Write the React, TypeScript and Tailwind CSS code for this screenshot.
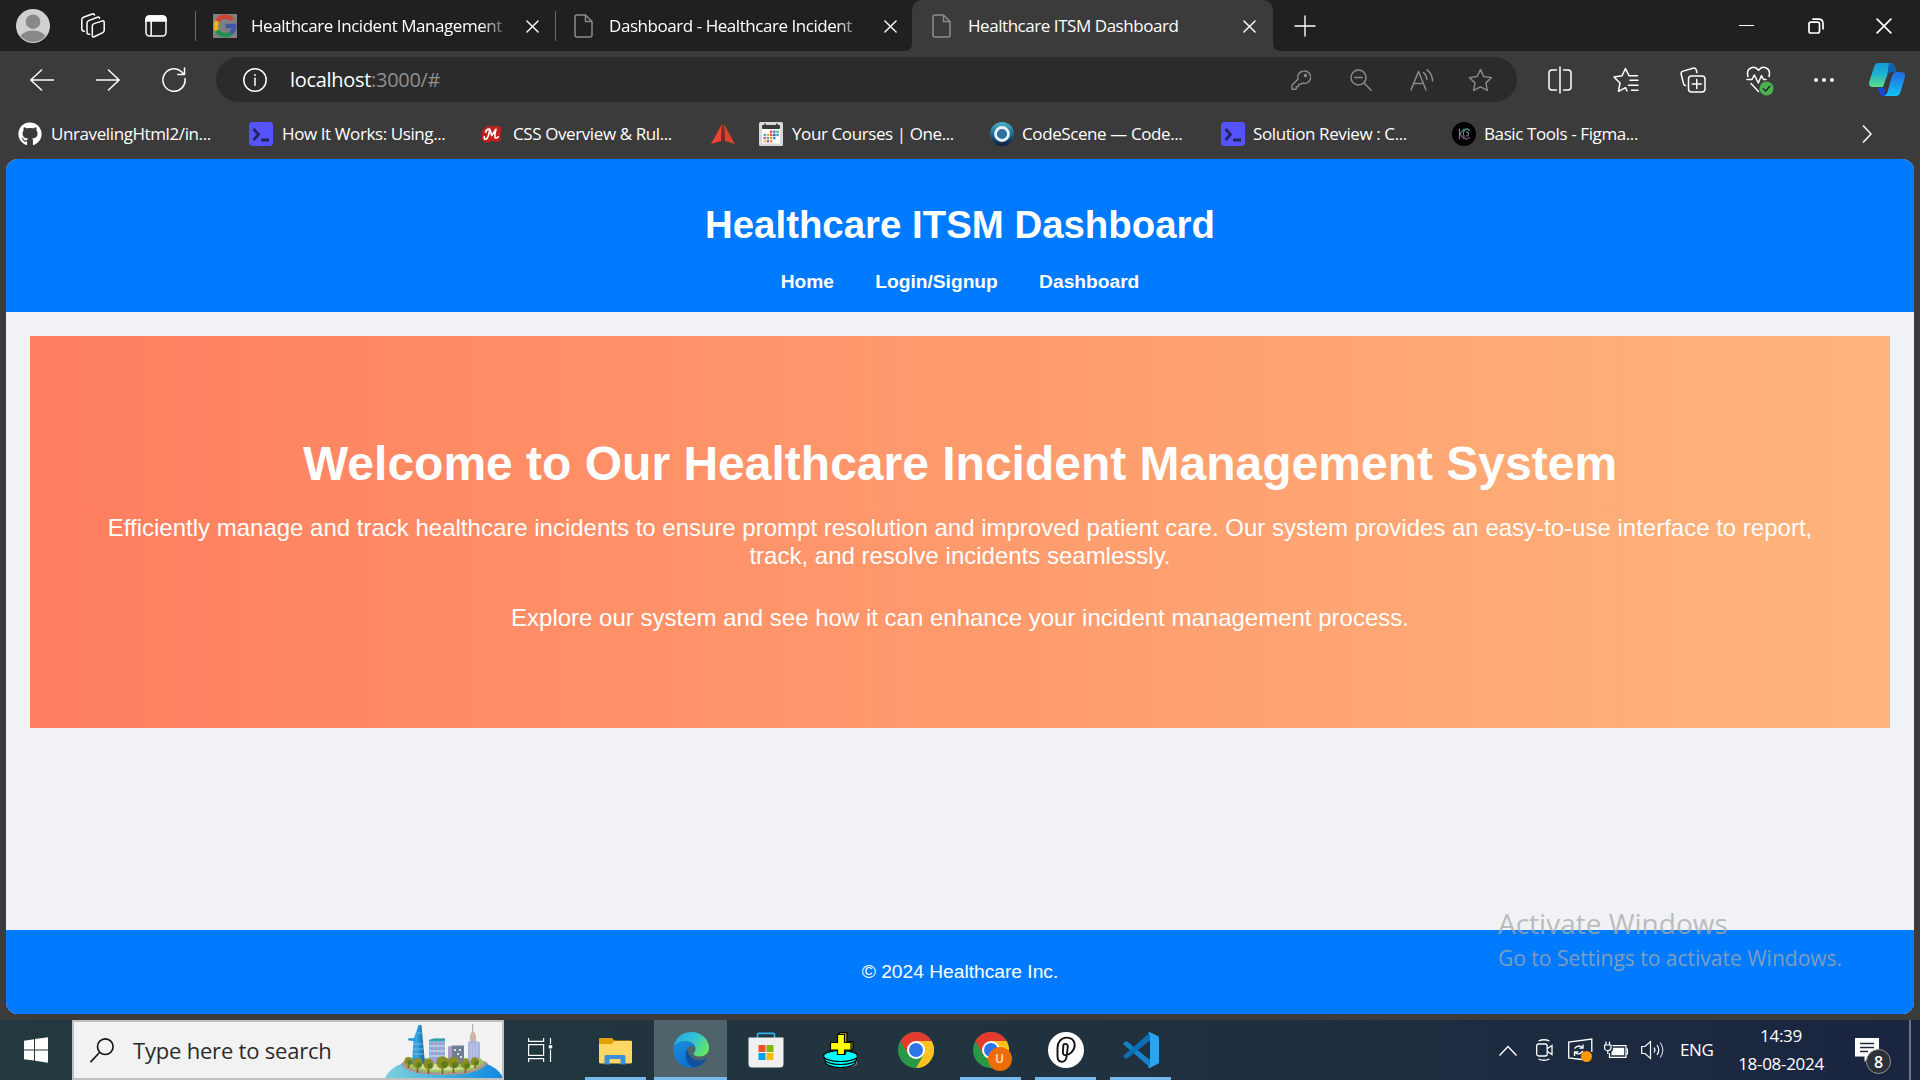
import React from "react";
import { FaGithub } from "react-icons/fa";

type IconProps = { className?: string };

/* ---------- Browser icons ---------- */

const Avatar = ({ className }: IconProps) => (
  <svg viewBox="0 0 34 34" className={className}>
    <defs>
      <clipPath id="av"><circle cx="17" cy="17" r="16" /></clipPath>
    </defs>
    <circle cx="17" cy="17" r="17" fill="#d2d0ce" />
    <g clipPath="url(#av)">
      <circle cx="17" cy="12.7" r="7.3" fill="#8a8886" />
      <ellipse cx="17" cy="32" rx="14" ry="10.5" fill="#8a8886" />
    </g>
  </svg>
);

const Workspaces = ({ className }: IconProps) => (
  <svg viewBox="0 0 24 25" className={className} fill="none" stroke="#fff" strokeWidth="1.5" strokeLinejoin="round" strokeLinecap="round">
    <path d="M13 10.6 L21.5 7.9 Q23.2 7.5 23.2 9.3 V17.6 Q23.2 19 21.8 19.7 L13.2 23.8 Q11.3 24.5 11.3 22.5 V13 Q11.3 11.2 13 10.6Z" />
    <path d="M8.6 21.3 Q6 21.6 6 19.4 V9.9 Q6 8.3 7.7 7.6 L16.5 4.2 Q18.3 3.7 18.6 5.2" />
    <path d="M3.3 18.2 Q.8 18.2 .8 16 V6.7 Q.8 5 2.5 4.3 L11.3 1 Q13 .5 13.6 2" />
  </svg>
);

const TabActions = ({ className }: IconProps) => (
  <svg viewBox="0 0 22 22" className={className} fill="none" stroke="#fff" strokeWidth="1.5">
    <rect x="1" y="1" width="20" height="20" rx="3.5" />
    <path d="M1 4.5 Q1 1 4.500 1 H17.500 Q21 1 21 4.500 V6 H1Z" fill="#fff" />
    <path d="M6.200 6 V21" />
  </svg>
);

const GoogleG = ({ className }: IconProps) => (
  <svg viewBox="0 0 24 24" className={className} fill="none" strokeWidth="4.400">
    <rect width="24" height="24" fill="#808080" />
    <path d="M19.200 5.800 A9.200 9.200 0 0 0 4.200 7.400" stroke="#d0402f" />
    <path d="M4.300 7.200 A9.200 9.200 0 0 0 4.200 16.600" stroke="#e8b41c" />
    <path d="M4.100 16.400 A9.200 9.200 0 0 0 17.800 19.200" stroke="#1f9150" />
    <path d="M17.500 19.400 A9.200 9.200 0 0 0 21.200 12 H12.500" stroke="#3f59a8" />
  </svg>
);

const Doc = ({ className }: IconProps) => (
  <svg viewBox="0 0 19 24" className={className} fill="none" stroke="#8c8c8c" strokeWidth="1.500" strokeLinejoin="round">
    <path d="M1 3 Q1 1 3 1 H11.500 L18 7.500 V21 Q18 23 16 23 H3 Q1 23 1 21Z" />
    <path d="M11.500 1 V7.500 H18" />
  </svg>
);

const Cross = ({ className }: IconProps) => (
  <svg viewBox="0 0 14 14" className={className} fill="none" stroke="#fff" strokeWidth="1.500" strokeLinecap="round">
    <path d="M1 1 L13 13 M13 1 L1 13" />
  </svg>
);

const Plus = ({ className }: IconProps) => (
  <svg viewBox="0 0 22 22" className={className} fill="none" stroke="#fff" strokeWidth="1.400">
    <path d="M11 .5 V21.500 M.5 11 H21.500" />
  </svg>
);

const Restore = ({ className }: IconProps) => (
  <svg viewBox="0 0 16 16" className={className} fill="none" stroke="#fff" strokeWidth="1.700">
    <rect x="1" y="4.200" width="10.500" height="10.800" rx="2" />
    <path d="M4.300 1.200 H10.500 Q15 1.200 15 5.700 V11.500" />
  </svg>
);

const Arrow = ({ className }: IconProps) => (
  <svg viewBox="0 0 24 22" className={className} fill="none" stroke="#fff" strokeWidth="1.500" strokeLinecap="round" strokeLinejoin="round">
    <path d="M23.500 11 H.8 M11.500 1 L.8 11 L11.500 21" />
  </svg>
);

const Reload = ({ className }: IconProps) => (
  <svg viewBox="0 0 24 25" className={className} fill="none" stroke="#fff" strokeWidth="1.500" strokeLinecap="round" strokeLinejoin="round">
    <path d="M23 11.500 A11.100 11.300 0 1 1 19.500 4.700 L22.300 7.500 M22.500 1 V7.600 H15.800" />
  </svg>
);

const Info = ({ className }: IconProps) => (
  <svg viewBox="0 0 24 24" className={className} fill="none" stroke="#fff" strokeWidth="1.500">
    <circle cx="12" cy="12" r="11.200" />
    <path d="M12 10.200 V17.500" strokeLinecap="round" />
    <circle cx="12" cy="7" r=".6" fill="#fff" strokeWidth=".8" />
  </svg>
);

const Key = ({ className }: IconProps) => (
  <svg viewBox="0 0 20 20" className={className} fill="none" stroke="#8b8b8b" strokeWidth="1.400" strokeLinejoin="round">
    <path d="M12.700 1 A6.200 6.200 0 1 1 11.200 12.900 L9.700 14.400 H7.500 V16.600 H5.300 V18.700 L4.800 19.200 H1 V15.300 L7.100 9.100 A6.200 6.200 0 0 1 12.700 1Z" />
    <circle cx="14.500" cy="5.500" r="1" fill="#8b8b8b" />
  </svg>
);

const ZoomOut = ({ className }: IconProps) => (
  <svg viewBox="0 0 22 22" className={className} fill="none" stroke="#8b8b8b" strokeWidth="1.500" strokeLinecap="round">
    <circle cx="8.500" cy="8.500" r="7.500" />
    <path d="M14 14 L21.200 21.200 M4.800 8.500 H12.200" />
  </svg>
);

const ReadAloud = ({ className }: IconProps) => (
  <svg viewBox="0 0 24 22" className={className} fill="none" stroke="#8b8b8b" strokeWidth="1.500" strokeLinecap="round" strokeLinejoin="round">
    <path d="M1 21 L8.500 2.500 L16 21 M3.700 14.500 H13.300" />
    <path d="M13.500 3.500 Q16.800 6.500 16.800 10.500 M17 .8 Q22.500 5 22.500 12" />
  </svg>
);

const Star = ({ className }: IconProps) => (
  <svg viewBox="0 0 26 24" className={className} fill="none" stroke="#8b8b8b" strokeWidth="1.500" strokeLinejoin="round">
    <path d="M13 1.200 L16.500 8.400 L24.500 9.500 L18.700 15 L20.100 22.900 L13 19.100 L5.900 22.900 L7.300 15 L1.500 9.500 L9.500 8.400Z" />
  </svg>
);

const Split = ({ className }: IconProps) => (
  <svg viewBox="0 0 24 28" className={className} fill="none" stroke="#fff" strokeWidth="1.500" strokeLinecap="round">
    <path d="M8.500 4 H4 Q1 4 1 7 V21 Q1 24 4 24 H8.500 M15.500 4 H20 Q23 4 23 7 V21 Q23 24 20 24 H15.500 M12 1 V27" />
  </svg>
);

const Favorites = ({ className }: IconProps) => (
  <svg viewBox="0 0 26 26" className={className} fill="none" stroke="#fff" strokeWidth="1.500" strokeLinejoin="round" strokeLinecap="round">
    <path d="M14 24 L12.500 20.600 L5.500 24.300 L7 16 L1 10 L9 8.800 L12.500 1.500 L16 8.800 H24.500" />
    <path d="M17 14 H25 M15.500 19 H25 M18.500 24 H25" transform="translate(0 -.8)" />
  </svg>
);

const Collections = ({ className }: IconProps) => (
  <svg viewBox="0 0 26 26" className={className} fill="none" stroke="#fff" strokeWidth="1.500" strokeLinecap="round" strokeLinejoin="round">
    <rect x="8.500" y="9" width="16.500" height="16" rx="3" />
    <path d="M16.750 12.500 V21.500 M12.250 17 H21.250" />
    <path d="M5.500 18.500 Q4 18.500 3.600 16.800 L1.200 7.300 Q.6 4.800 3 4.100 L13 1.200 Q15.600 .6 16.300 3 L16.900 5.500" />
  </svg>
);

const Health = ({ className }: IconProps) => (
  <svg viewBox="0 0 28 31" className={className} fill="none" stroke="#fff" strokeWidth="1.500" strokeLinecap="round" strokeLinejoin="round">
    <path d="M2 10.500 C-.5 1.500 8.500 -1.200 12.500 4.300 C16.500 -1.200 25.500 1.500 23 10.500" />
    <path d="M1 13.500 H6 L8.300 9 L12.300 17 L15.500 9.500 L17.500 13.500 H20" />
    <path d="M5 17.500 L12.500 25.500" />
    <circle cx="20.500" cy="22.500" r="7" fill="#4caf50" stroke="none" />
    <path d="M17.300 22.700 L19.700 25 L23.800 20.300" stroke="#222" strokeWidth="1.300" />
  </svg>
);

const Copilot = ({ className }: IconProps) => (
  <svg viewBox="0 0 36 33" className={className}>
    <defs>
      <linearGradient id="cpA" x1="0" y1="0" x2="0" y2="1">
        <stop offset="0" stopColor="#159bd8" /><stop offset=".45" stopColor="#1fb1d2" /><stop offset="1" stopColor="#5fe084" />
      </linearGradient>
      <linearGradient id="cpB" x1="0" y1="0" x2="0" y2="1">
        <stop offset="0" stopColor="#2368e0" /><stop offset="1" stopColor="#12c2f6" />
      </linearGradient>
    </defs>
    <path d="M9 0 H21 Q24.500 0 25.800 4 L27.400 9 H22 Q19 9 17.500 14 L14 24 H4 Q-1 24 .5 18 L5 4 Q6.300 0 9 0Z" fill="url(#cpA)" />
    <path d="M20 0 Q24.500 0 25.800 4 L27.400 9 H22 Q19.500 9 18 13 Z" fill="#0f62b0" />
    <path d="M8 24.500 H14.500 L17 31 Q17.500 33 20 33 H15 Q11.500 33 10.500 29.500Z" fill="#1747d8" />
    <path d="M27 9 H32 Q37.300 9 35.700 15 L31.500 29 Q30.300 33 27 33 H15 Q17.500 32.500 18.500 29 L23 13 Q24.200 9 27 9Z" fill="url(#cpB)" />
  </svg>
);

/* ---------- Bookmark icons ---------- */

const Educative = ({ className }: IconProps) => (
  <svg viewBox="0 0 24 24" className={className} fill="none">
    <rect width="24" height="24" rx="3.500" fill="#5553ff" />
    <path d="M4.500 7 L9.500 12.500 L4.500 18 M12 18 H20" stroke="#23255a" strokeWidth="2.800" />
  </svg>
);

const RedM = ({ className }: IconProps) => (
  <svg viewBox="0 0 22 18" className={className} fill="none">
    <path d="M5 2 Q8 -.5 12 1.500 Q17 -1 21 2 Q22 5 20 9 Q22 14 19 16.500 Q15 18 12 16 Q8 18.500 3 17 Q-.5 15 1 10 Q0 5 5 2Z" fill="#c4201f" />
    <path d="M3.500 12 Q3 15 5.500 14.300 Q7.500 13.500 9.300 4 L11.200 10.500 L15.700 4 Q14 10 14.800 12.800 Q15.800 14 18 12 M9.300 4 Q5.500 3.500 5 7" stroke="#fff" strokeWidth="1.700" strokeLinecap="round" strokeLinejoin="round" />
  </svg>
);

const RedArrow = ({ className }: IconProps) => (
  <svg viewBox="0 0 24 20" className={className}>
    <path d="M11 0 L10 17 L0 20Z" fill="#ee4431" />
    <path d="M13 0 L14 17 L24 20Z" fill="#d9432f" />
    <path d="M11 0 H13 L14 17 L12 15.500 L10 17Z" fill="#7d2d25" />
  </svg>
);

const Calendar = ({ className }: IconProps) => {
  const dots = ["", "", "#e8493d", "#3d85d8", "#59b36a", "#3ba6d8", "#e0b83a", "#e8493d", "#3d4fa8", "#3ba6a0", "#c9539b", "#59b36a", "#ef8c2f", "#3d85d8", "", "#efc12f", "#8a5fc0", "#ef8c2f", "", ""];
  return (
    <svg viewBox="0 0 24 24" className={className}>
      <rect width="24" height="24" rx="1.500" fill="#d9d9d9" />
      <rect x="3" y="3" width="18" height="4" rx="1" fill="#3a3a3a" />
      <path d="M6 1.500 V5 M18 1.500 V5" stroke="#3a3a3a" strokeWidth="1.600" />
      <rect x="3" y="7" width="18" height="14.500" fill="#fff" />
      {dots.map((c, i) => c && <rect key={i} x={4.500 + (i % 5) * 3.200} y={8.500 + Math.floor(i / 5) * 3.200} width="2.400" height="2.400" fill={c} />)}
    </svg>
  );
};

const CodeScene = ({ className }: IconProps) => (
  <svg viewBox="0 0 24 24" className={className}>
    <defs>
      <linearGradient id="cs" x1="0" y1="0" x2="0" y2="1">
        <stop offset="0" stopColor="#4cb6c9" /><stop offset=".5" stopColor="#1f6a96" /><stop offset="1" stopColor="#0d1b3e" />
      </linearGradient>
    </defs>
    <circle cx="12" cy="12" r="12" fill="url(#cs)" />
    <circle cx="12" cy="12" r="6.500" fill="#2f6f9d" stroke="#e8f2f7" strokeWidth="2.800" />
  </svg>
);

const KcLogo = ({ className }: IconProps) => (
  <svg viewBox="0 0 24 24" className={className} fill="none">
    <defs>
      <linearGradient id="kc" x1="0" y1="0" x2="0" y2="1">
        <stop offset="0" stopColor="#5aa4a8" /><stop offset="1" stopColor="#a0548c" />
      </linearGradient>
    </defs>
    <circle cx="12" cy="12" r="12" fill="#000" />
    <path d="M7.500 6.500 V17.500 M12 7 L8 12 L12 17 M17.800 9 Q16 6.500 13.500 7 Q11.500 9 11.500 12 Q11.500 15.500 13.500 17 Q16 17.500 17.800 15 M14 10 Q16.500 9.500 16.500 12 Q16.500 14.500 14 14" stroke="url(#kc)" strokeWidth="1.100" />
  </svg>
);

/* ---------- Taskbar icons ---------- */

const WindowsLogo = ({ className }: IconProps) => (
  <svg viewBox="0 0 24 26" className={className} fill="#fff">
    <path d="M0 3.700 L10 2.300 V12.400 H0Z M11 2.100 L24 .3 V12.400 H11Z M0 13.400 H10 V23.600 L0 22.200Z M11 13.400 H24 V25.700 L11 23.800Z" />
  </svg>
);

const SearchGlass = ({ className }: IconProps) => (
  <svg viewBox="0 0 24 25" className={className} fill="none" stroke="#111" strokeWidth="1.600">
    <circle cx="15.300" cy="8.700" r="7.800" />
    <path d="M9.700 14.300 L.5 24.200" />
  </svg>
);

const City = ({ className }: IconProps) => (
  <svg viewBox="0 0 120 56" className={className}>
    <defs>
      <linearGradient id="sea" x1="0" y1="0" x2="1" y2="0">
        <stop offset="0" stopColor="#7fd0de" /><stop offset=".5" stopColor="#45b0dd" /><stop offset="1" stopColor="#0e86e2" />
      </linearGradient>
      <linearGradient id="twr" x1="0" y1="0" x2="1" y2="0">
        <stop offset="0" stopColor="#1c86cc" /><stop offset=".5" stopColor="#3aa5e2" /><stop offset="1" stopColor="#14629e" />
      </linearGradient>
    </defs>
    <path d="M0 56 Q5 44 17 40 Q60 30 103 40 Q116 45 120 56Z" fill="url(#sea)" />
    <path d="M17 40 Q22 51 60 51 Q96 51 104 39 L100 37 H20Z" fill="#a8998c" />
    <path d="M20 38 Q25 48.500 60 48.500 Q93 48.500 100 38 L96 34 H24Z" fill="#9cc35c" />
    <path d="M28 40 Q50 35 62 41 T96 39 L90 43 Q60 49 34 44Z" fill="#d3dfa4" />
    <path d="M28 40 L29.500 17 L24.500 16.500 L24 14.500 L30 14 L34.500 1 H37.500 L41 40Z" fill="url(#twr)" />
    <path d="M29 20 H39 M29 25 H39.500 M28.500 30 H40 M33 9 H38" stroke="#8fd0f2" strokeWidth=".7" />
    <path d="M45 16 L50 14.500 H61 V40 H45Z" fill="#86b7d6" />
    <path d="M45 16 L50 14.500 H61 V17 H45Z" fill="#35a1ad" />
    <path d="M48 18 V40 M52 18 V40 M56 18 V40 M59.500 18 V40" stroke="#c58bd0" strokeWidth="1.400" />
    <path d="M45.500 22 H61 M45.500 27 H61 M45.500 32 H61" stroke="#c9eef2" strokeWidth="1" />
    <path d="M64 23 L69 21.500 H80 V40 H64Z" fill="#707e9e" />
    <path d="M64 23 L68 21.800 V40 H64Z" fill="#a99cc0" />
    <path d="M70 25 h2 v2 h-2z M75 25 h2 v2 h-2z M73 29 h2 v2 h-2z M69.500 33 h2 v2 h-2z M76 32 h2 v2 h-2z" fill="#e8e2b8" />
    <path d="M84 18 L86 17 V12 L87.500 9 H90 V8 L88.200 1 L90.500 9 L92 12 V17 L96 18.500 V40 H84Z" fill="#a9b3dc" />
    <path d="M86 17 V11.500 L87.500 8 H90 L92 11.500 V17Z" fill="#cfb5a6" />
    <path d="M88.700 0 V8" stroke="#8c8c9c" strokeWidth=".8" />
    <path d="M87 19 V40 M90 19 V40 M93 19 V40" stroke="#c6cef0" strokeWidth=".8" />
    <g stroke="#8a5a22" strokeWidth="1.600">
      <path d="M24.500 39 V44 M33.500 42 V49 M44.500 42 V50 M58.500 41 V50 M69.500 42 V49 M81.500 42 V49 M91 39 V44" />
    </g>
    <g fill="#8a8e23">
      <circle cx="24.500" cy="37" r="4" /><circle cx="33.500" cy="39" r="5" /><circle cx="44.500" cy="40" r="5.200" />
      <circle cx="58.500" cy="38.500" r="6.300" /><circle cx="69.500" cy="38.500" r="5.800" /><circle cx="81.500" cy="40" r="5" /><circle cx="91" cy="37.500" r="4.300" />
    </g>
    <g fill="#5f7a1d">
      <circle cx="25.800" cy="38.500" r="2.200" /><circle cx="35" cy="41" r="2.700" /><circle cx="46" cy="42" r="2.700" />
      <circle cx="60.500" cy="40.500" r="3.300" /><circle cx="71" cy="41" r="3" /><circle cx="83" cy="42" r="2.700" /><circle cx="92.500" cy="39" r="2.200" />
    </g>
  </svg>
);

const TaskView = ({ className }: IconProps) => (
  <svg viewBox="0 0 26 24" className={className} fill="none" stroke="#fff" strokeWidth="1.200">
    <rect x=".6" y="6.600" width="15" height="10.800" />
    <path d="M.6 0 V3.400 H15.600 V0 M.6 24 V20.600 H15.600 V24 M22.500 0 V6 M22.500 11.500 V24" />
    <rect x="20.800" y="7.200" width="3.400" height="3.200" fill="#fff" stroke="none" />
  </svg>
);

const Explorer = ({ className }: IconProps) => (
  <svg viewBox="0 0 33 28" className={className}>
    <path d="M0 2 Q0 1 1.200 1 H13 L15.500 3.500 H31.500 Q33 3.500 33 5 V10 H0Z" fill="#e1a100" />
    <path d="M0 7 H12.500 L15.500 4 H33 V25 Q33 26.500 31.500 26.500 H1.500 Q0 26.500 0 25Z" fill="#ffd766" />
    <path d="M5.500 27.500 V19.500 Q5.500 18 7 18 H25 Q26.500 18 26.500 19.500 V27.500 H21.500 V22 H10.500 V27.500Z" fill="#3c8fdd" />
  </svg>
);

const EdgeLogo = ({ className }: IconProps) => (
  <svg viewBox="0 0 36 36" className={className}>
    <defs>
      <linearGradient id="eg1" x1="0" y1=".2" x2="1" y2=".7">
        <stop offset="0" stopColor="#2ba7e6" /><stop offset=".5" stopColor="#33c3d3" /><stop offset="1" stopColor="#66ea5a" />
      </linearGradient>
      <linearGradient id="eg2" x1="0" y1="0" x2=".6" y2="1">
        <stop offset="0" stopColor="#1b8ddb" /><stop offset="1" stopColor="#0c6fd0" />
      </linearGradient>
    </defs>
    <path d="M.5 15 C2.500 5 10 0 18 0 C29 0 36 8 36 15.500 C36 21 32 24.500 27 24.500 C23 24.500 20.500 23 20.500 21.700 C20.500 20.700 22.500 20 22.500 16.800 C22.500 12 17.500 9.500 12.500 9.500 C7 9.500 3 12 .5 15Z" fill="url(#eg1)" />
    <path d="M.2 17.500 C.2 12 6 9.300 12 9.300 C17 9.300 21.500 11.500 22.300 15 C20 13 14.500 13.500 13.200 20 C11.800 28 18 34 24 35 C10 38.500 .2 28.500 .2 17.500Z" fill="url(#eg2)" />
    <path d="M14.300 16.500 C10 23 14 36.500 24 35 C28.500 33.700 31.500 30.800 33 28.500 C33.800 27.300 33 26.700 32 27.200 C24 31 14.500 26 14.300 16.500Z" fill="#124f9c" />
  </svg>
);

const Store = ({ className }: IconProps) => (
  <svg viewBox="0 0 36 36" className={className}>
    <path d="M9.500 6 V2.500 Q9.500 1.300 11 1.300 H25 Q26.500 1.300 26.500 2.500 V6" fill="none" stroke="#35b1ee" strokeWidth="1.700" />
    <path d="M.5 5.500 H35.500 V32 Q35.500 35.500 32 35.500 H4 Q.5 35.500 .5 32Z" fill="#f0f0f0" />
    <rect x="10.500" y="13" width="7" height="7" fill="#f25022" /><rect x="18.500" y="13" width="7" height="7" fill="#7fba00" />
    <rect x="10.500" y="21" width="7" height="7" fill="#00a4ef" /><rect x="18.500" y="21" width="7" height="7" fill="#ffb900" />
  </svg>
);

const CrossStack = ({ className }: IconProps) => (
  <svg viewBox="0 0 36 36" className={className} stroke="#000" strokeWidth="1.200">
    <ellipse cx="19" cy="31" rx="15.500" ry="5" fill="#777" stroke="none" />
    <ellipse cx="17.500" cy="30" rx="15" ry="5.500" fill="#0ff" />
    <ellipse cx="17.500" cy="27" rx="16" ry="5.500" fill="#0ff" />
    <ellipse cx="17.500" cy="24" rx="17" ry="5.500" fill="#0ff" />
    <path d="M15.500 2 L17.500 .6 H24 V9.500 H30 V17 L28 19 H22.500 V22 H15.500Z" fill="#b5b500" />
    <path d="M14.500 2.500 H21.500 V10.500 H28 V18 H21.500 V22.500 H14.500 V18 H7.500 V10.500 H14.500Z" fill="#ff0" />
  </svg>
);

const Chrome = ({ className }: IconProps) => (
  <svg viewBox="0 0 36 36" className={className}>
    <circle cx="18" cy="18" r="18" fill="#279847" />
    <path d="M2.400 9 A18 18 0 0 1 33.600 9 L18 9.300 L10.200 22.500Z" fill="#e33b2e" />
    <path d="M33.600 9 A18 18 0 0 1 18 36 L25.800 22.500 L18 9Z" fill="#fcc31e" />
    <circle cx="18" cy="18" r="9" fill="#fff" />
    <circle cx="18" cy="18" r="7" fill="#2c75e8" />
  </svg>
);

const LoopP = ({ className }: IconProps) => (
  <svg viewBox="0 0 36 36" className={className} fill="none">
    <circle cx="18" cy="18" r="18" fill="#fff" />
    <path d="M15.300 13.500 C15.300 19.500 13.500 23 17.500 23.300 C21.500 23 27 18.500 26.700 12.500 C26.200 7.500 22.300 5.500 18.500 5.600 C13 5.800 9.200 10.500 9.500 16 V24 C9.500 27.500 11 29.800 13.800 29.800 C17 29.800 18.300 27.500 18.700 24 L19.800 14.500 C19.800 11.500 15.500 11 15.300 13.500Z" stroke="#111" strokeWidth="1.900" />
  </svg>
);

const VsCode = ({ className }: IconProps) => (
  <svg viewBox="0 0 36 36" className={className}>
    <path d="M1 10.500 L3.500 9 L27 28 V35.500 L.6 12.500 Q0 11.500 1 10.500Z" fill="#1583cb" />
    <path d="M1 25.500 L3.500 27 L27 8.500 V.5 L.6 23.500 Q0 24.500 1 25.500Z" fill="#0b6fb5" />
    <path d="M26.500 0 L34.800 4 Q36 4.700 36 6 V30 Q36 31.300 34.800 32 L26.500 36 Q24.800 36 25.500 34.500 L27 33 V3 L25.500 1.500 Q25 .2 26.500 0Z" fill="#27a5f2" />
  </svg>
);

/* ---------- Data ---------- */

const bookmarks = [
  { icon: <FaGithub className="size-6 text-white" />, label: "UnravelingHtml2/in...", box: "ml-[18px] w-[231px]", gap: "ml-[9px]", track: "tracking-[-0.4px]" },
  { icon: <Educative className="size-6" />, label: "How It Works: Using...", box: "w-[232px]", gap: "ml-[9px]", track: "tracking-[-0.4px]" },
  { icon: <RedM className="h-[18px] w-[21px]" />, label: "CSS Overview & Rul...", box: "w-[230px]", gap: "ml-[11px]", track: "tracking-[-0.4px]" },
  { icon: <RedArrow className="h-5 w-6" />, label: "", box: "w-[48px]", gap: "", track: "" },
  { icon: <Calendar className="size-6" />, label: "Your Courses | One...", box: "w-[231px]", gap: "ml-[9px]", track: "tracking-[-0.4px]" },
  { icon: <CodeScene className="size-6" />, label: "CodeScene — Code...", box: "w-[231px]", gap: "ml-[8px]", track: "tracking-[-0.4px]" },
  { icon: <Educative className="size-6" />, label: "Solution Review : C...", box: "w-[231px]", gap: "ml-[8px]", track: "tracking-[-0.4px]" },
  { icon: <KcLogo className="size-6" />, label: "Basic Tools - Figma...", box: "w-[231px]", gap: "ml-[8px]", track: "tracking-[-0.4px]" },
];

const apps = [
  { icon: <Explorer className="mt-px h-[28px] w-[33px]" />, bar: "w-[61px]", active: false },
  { icon: <EdgeLogo className="size-9" />, bar: "w-[73px]", active: true },
  { icon: <Store className="size-9" />, bar: "", active: false },
  { icon: <CrossStack className="size-9" />, bar: "", active: false },
  { icon: <Chrome className="size-9" />, bar: "", active: false },
  {
    icon: (
      <div className="relative">
        <Chrome className="size-9" />
        <span className="absolute top-[15px] left-[15px] flex size-6 items-center justify-center rounded-full bg-[#ee6c04] font-['Roboto'] text-[13px] font-medium text-[#ffd9bd]">U</span>
      </div>
    ),
    bar: "w-[61px]",
    active: false,
  },
  { icon: <LoopP className="size-9" />, bar: "w-[61px]", active: false },
  { icon: <VsCode className="size-9" />, bar: "w-[61px]", active: false },
];

/* ---------- Sections ---------- */

const TabStrip = () => (
  <div className="flex h-[51px] shrink-0 items-center bg-[#202020] text-[17px] text-white">
    <Avatar className="ml-4 size-[34px] shrink-0" />
    <Workspaces className="ml-[31px] h-[25px] w-6 shrink-0" />
    <TabActions className="ml-[40px] size-[22px] shrink-0" />
    <div className="ml-[28px] h-[30px] w-px shrink-0 bg-[#6a6a6a]" />
    <GoogleG className="ml-[17px] size-6 shrink-0" />
    <div className="ml-[14px] w-[261px] shrink-0 overflow-hidden whitespace-nowrap tracking-[-0.45px] [mask-image:linear-gradient(to_right,#000_88%,transparent)]">Healthcare Incident Management</div>
    <Cross className="ml-[14px] mt-[2px] size-[13px] shrink-0" />
    <div className="ml-4 h-[30px] w-px shrink-0 bg-[#6a6a6a]" />
    <Doc className="ml-[18px] h-6 w-[19px] shrink-0" />
    <div className="ml-4 w-[258px] shrink-0 overflow-hidden whitespace-nowrap tracking-[-0.45px] [mask-image:linear-gradient(to_right,#000_88%,transparent)]">Dashboard - Healthcare Incident</div>
    <Cross className="ml-[17px] mt-[2px] size-[13px] shrink-0" />
    <div className="relative ml-[15px] flex h-full w-[361px] shrink-0 items-center rounded-t-[10px] bg-[#3b3b3b]">
      <svg className="absolute bottom-0 -left-2 size-2" viewBox="0 0 8 8"><path d="M8 0 V8 H0 Q8 8 8 0Z" fill="#3b3b3b" /></svg>
      <svg className="absolute -right-2 bottom-0 size-2" viewBox="0 0 8 8"><path d="M0 0 V8 H8 Q0 8 0 0Z" fill="#3b3b3b" /></svg>
      <Doc className="ml-5 h-6 w-[19px]" />
      <div className="ml-[17px] whitespace-nowrap tracking-[-0.45px]">Healthcare ITSM Dashboard</div>
      <Cross className="mr-[17px] ml-auto mt-[2px] size-[13px]" />
    </div>
    <Plus className="ml-[21px] size-[22px] shrink-0" />
    <div className="ml-[423px] h-[1.500px] w-[15px] shrink-0 bg-white" />
    <Restore className="ml-[54px] size-4 shrink-0" />
    <Cross className="ml-[52px] size-4 shrink-0" />
  </div>
);

const Toolbar = () => (
  <div className="flex h-[57px] shrink-0 items-center">
    <Arrow className="ml-[30px] h-[22px] w-6 shrink-0" />
    <Arrow className="ml-[42px] h-[22px] w-6 shrink-0 rotate-180" />
    <Reload className="ml-[42px] h-[25px] w-6 shrink-0" />
    <div className="ml-[30px] flex h-[45px] w-[1301px] shrink-0 items-center rounded-full bg-[#2b2b2b]">
      <Info className="ml-[27px] size-6" />
      <div className="ml-[23px] text-[20px] tracking-[-0.3px] whitespace-nowrap text-white">localhost<span className="text-[#8f8f8f]">:3000/#</span></div>
      <Key className="ml-auto size-5" />
      <ZoomOut className="ml-[39px] size-[22px]" />
      <ReadAloud className="ml-[38px] h-[22px] w-6" />
      <Star className="mr-[24px] ml-[34px] h-6 w-[25px]" />
    </div>
    <Split className="ml-[31px] h-7 w-6 shrink-0" />
    <Favorites className="ml-[41px] size-[26px] shrink-0" />
    <Collections className="ml-[41px] size-[26px] shrink-0" />
    <Health className="ml-[40px] mt-[3px] h-[31px] w-7 shrink-0" />
    <div className="ml-[40px] flex w-5 shrink-0 justify-between">
      <span className="size-1 rounded-full bg-white" />
      <span className="size-1 rounded-full bg-white" />
      <span className="size-1 rounded-full bg-white" />
    </div>
    <Copilot className="ml-[35px] h-[33px] w-9 shrink-0" />
  </div>
);

const BookmarkBar = () => (
  <div className="flex h-[51px] shrink-0 items-center text-[17px] text-white">
    {bookmarks.map((b, i) => (
      <div key={i} className={`flex shrink-0 items-center whitespace-nowrap ${b.box}`}>
        <span className="shrink-0">{b.icon}</span>
        <span className={`${b.gap} ${b.track}`}>{b.label}</span>
      </div>
    ))}
    <svg viewBox="0 0 10 18" className="mr-[48px] ml-auto h-[18px] w-[10px]" fill="none" stroke="#fff" strokeWidth="1.500">
      <path d="M1 .5 L9 9 L1 17.500" />
    </svg>
  </div>
);

const Page = () => (
  <div className="relative mx-[6px] flex h-[855px] shrink-0 flex-col overflow-hidden rounded-xl bg-[#f0f2f5] font-['Liberation_Sans',sans-serif] text-white">
    <header className="flex h-[153px] flex-col items-center bg-[#007bff] pt-[44px] font-bold">
      <h1 className="text-[38.4px] leading-[44px]">Healthcare ITSM Dashboard</h1>
      <nav className="mt-6 flex gap-[41.3px] text-[19.2px] leading-[22px]">
        <a>Home</a>
        <a>Login/Signup</a>
        <a>Dashboard</a>
      </nav>
    </header>
    <main className="flex-1 p-6">
      <section className="h-[392px] bg-linear-to-r from-[#ff7e5f] to-[#feb47b] px-[72px] pt-[100px] text-center">
        <h2 className="text-[48px] leading-[55px] font-bold">Welcome to Our Healthcare Incident Management System</h2>
        <p className="mt-[23px] text-[24px] leading-[27.500px]">
          Efficiently manage and track healthcare incidents to ensure prompt resolution and improved patient care. Our system provides an easy-to-use interface to report, track, and resolve incidents seamlessly.
        </p>
        <p className="mt-[35px] text-[24px] leading-[27.500px]">Explore our system and see how it can enhance your incident management process.</p>
      </section>
    </main>
    <footer className="flex h-[84px] items-center justify-center bg-[#007bff] text-[19.2px] leading-[22px]">© 2024 Healthcare Inc.</footer>
    <div className="absolute top-[745px] left-[1492px] font-['Open_Sans',sans-serif] whitespace-nowrap text-[#a9a9a9]/75">
      <div className="text-[28px] leading-[38px] tracking-[0px]">Activate Windows</div>
      <div className="text-[21px] leading-[32px] tracking-[0px]">Go to Settings to activate Windows.</div>
    </div>
  </div>
);

const Taskbar = () => (
  <div className="flex h-[60px] shrink-0 items-center bg-linear-to-r from-[#22393f] via-[#21333f] to-[#1a2540] text-white">
    <WindowsLogo className="ml-6 h-[26px] w-6 shrink-0" />
    <div className="relative ml-6 flex h-full w-[432px] shrink-0 items-center overflow-hidden border-2 border-[#c0c0c0] bg-[#f2f2f2]">
      <SearchGlass className="ml-4 h-[25px] w-6" />
      <span className="ml-[19px] text-[22px] tracking-[-0.2px] whitespace-nowrap text-[#2b2b2b]">Type here to search</span>
      <City className="absolute -right-[2px] -bottom-[2px] h-[56px] w-[120px]" />
    </div>
    <TaskView className="ml-6 h-6 w-[26px] shrink-0" />
    <div className="ml-[25px] flex h-full shrink-0 gap-[2px]">
      {apps.map((a, i) => (
        <div key={i} className={`relative flex h-full w-[73px] items-center justify-center ${a.active ? "bg-[#4f636b]" : ""}`}>
          {a.icon}
          <span className={`absolute bottom-0 h-[3px] bg-[#76b9ed] ${a.bar}`} />
        </div>
      ))}
    </div>
    <svg viewBox="0 0 18 11" className="ml-[322px] h-[11px] w-[18px] shrink-0" fill="none" stroke="#fff" strokeWidth="1.400"><path d="M.5 10.500 L9 1.500 L17.500 10.500" /></svg>
    <svg viewBox="0 0 17 22" className="ml-[19px] h-[22px] w-[17px] shrink-0" fill="none" stroke="#fff" strokeWidth="1.300">
      <rect x=".7" y="5" width="10.500" height="12" rx="2" />
      <path d="M11.500 9.500 L16 6.500 V15.500 L11.500 12.500 M2.500 2 Q8 -.5 13.500 2 M2.500 20 Q8 22.500 13.500 20" />
    </svg>
    <svg viewBox="0 0 25 24" className="ml-[15px] h-6 w-[25px] shrink-0" fill="none" stroke="#fff" strokeWidth="1.300">
      <path d="M14 21.500 L.7 20 V4 L23.800 1 V14" />
      <path d="M6.500 10.500 Q10.500 6 14.500 9.500 M15 6.500 V10.200 H11.300 M15 13 Q11 18 7 14.500 M6.500 18 V14 H10.300" />
      <circle cx="18.500" cy="18.500" r="5.500" fill="#ff9800" stroke="none" />
    </svg>
    <svg viewBox="0 0 24 18" className="ml-[11px] h-[18px] w-6 shrink-0" fill="none" stroke="#fff" strokeWidth="1.200">
      <path d="M8.500 4.600 H22 V16.400 H5.500 V12 M22 8 H23.600 V13 H22" />
      <path d="M9 6.700 H20.200 V14.300 H7.500 V11 L9 9Z" fill="#fff" stroke="none" />
      <path d="M2 .5 V4 M5.500 .5 V4 M.6 4 H7 V7 Q7 9.500 3.800 9.500 Q.6 9.500 .6 7Z M3.800 9.500 V13" />
    </svg>
    <svg viewBox="0 0 24 20" className="ml-[13px] h-5 w-6 shrink-0" fill="none" stroke="#fff" strokeWidth="1.200">
      <path d="M.7 6.500 H4 L9.500 1.500 V18.500 L4 13.500 H.7Z" />
      <path d="M13 7.500 Q14.800 10 13 12.500 M16 5 Q19.500 10 16 15" />
      <path d="M19.200 2.500 Q24.500 10 19.200 17.500" opacity=".75" />
    </svg>
    <span className="ml-[15px] w-[34px] shrink-0 text-[17px] tracking-[-0.4px]">ENG</span>
    <div className="ml-[18px] flex w-[98px] shrink-0 flex-col items-center text-[17px] leading-7 tracking-[-0.3px] whitespace-nowrap">
      <span>14:39</span>
      <span>18-08-2024</span>
    </div>
    <div className="relative ml-[25px] h-[42px] w-9 shrink-0">
      <svg viewBox="0 0 24 25" className="absolute top-[9px] left-0 h-[25px] w-6">
        <path d="M0 0 H24 V18.500 H14 L9.500 24 V18.500 H0Z" fill="#fff" />
        <path d="M5 5.500 H19 M5 9.500 H19 M5 13.500 H13" stroke="#1c2a40" strokeWidth="1.300" />
      </svg>
      <span className="absolute top-5 left-[11px] flex size-[25px] items-center justify-center rounded-full border border-[#8d9299] bg-[#2c3138] font-['Open_Sans'] text-[16px] font-semibold">8</span>
    </div>
    <div className="ml-[18px] h-full w-[2px] bg-[#6d7480]" />
  </div>
);

export default function App() {
  return (
    <div className="flex h-[1080px] w-[1920px] flex-col overflow-hidden bg-[#3b3b3b] font-['Open_Sans',sans-serif]">
      <TabStrip />
      <Toolbar />
      <BookmarkBar />
      <Page />
      <div className="h-[6px] shrink-0" />
      <Taskbar />
    </div>
  );
}
